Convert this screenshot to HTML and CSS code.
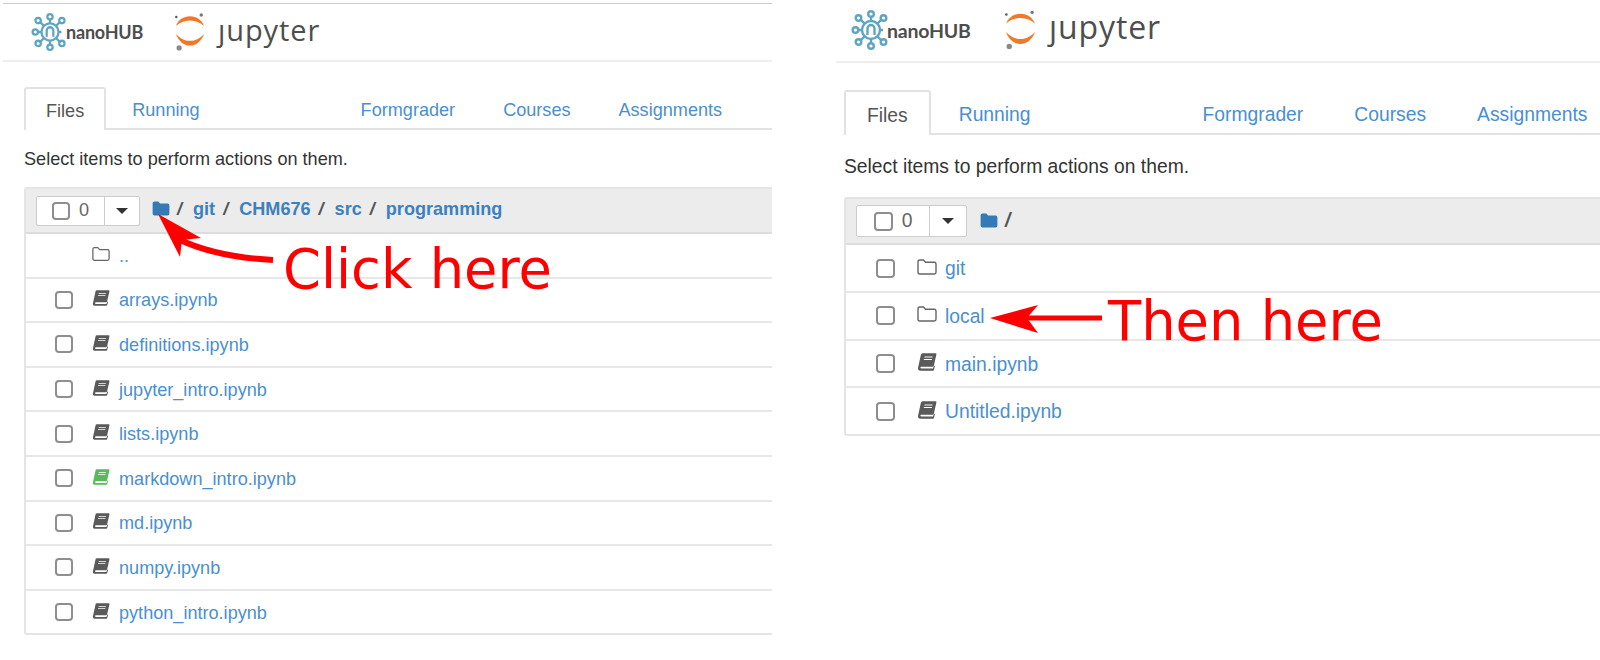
FILE: index.html
```html
<!DOCTYPE html>
<html lang="en">
<head>
  <meta charset="UTF-8">
  <title>nanoHUB Jupyter file browser</title>
  <link rel="stylesheet" href="styles.css">
</head>
<body>
  <svg class="defs" width="0" height="0">
    <symbol id="i-nano" viewBox="0 0 40 40">
      <g fill="none" stroke="#5fa5c2" stroke-width="2.4">
        <circle cx="20" cy="20" r="9"/>
        <path d="M20 11V6M26.400 13.600L31 9M29 20h3M26.400 26.400L31 31M20 29v5M13.600 26.400L9 31M11 20H7M13.600 13.600L9 9"/>
        <circle cx="20" cy="4" r="2.800"/>
        <circle cx="32.500" cy="8" r="2.800"/>
        <circle cx="32.500" cy="32" r="2.800"/>
        <circle cx="20" cy="36" r="2.800"/>
        <circle cx="7.500" cy="32" r="2.800"/>
        <circle cx="4.500" cy="20" r="2.800"/>
        <circle cx="7.500" cy="8" r="2.800"/>
        <path d="M16.500 25v-6.500a3.500 3.500 0 0 1 7 0V25"/>
      </g>
    </symbol>
    <symbol id="i-jup" viewBox="0 0 32 40">
      <path fill="#f37726" d="M16 3.200C9 3.200 3.500 7 1 13.600 5 9.800 10 7.600 16 7.600s11 2.200 15 6C28.500 7 23 3.200 16 3.200z"/>
      <path fill="#f37726" d="M16 34.400C9 34.400 3.500 29 1 22 5 26.200 10 29.400 16 29.400s11-3.200 15-7.400C28.500 29 23 34.400 16 34.400z"/>
      <circle cx="28" cy="1.800" r="1.800" fill="#777"/>
      <circle cx="1.400" cy="4" r="1.300" fill="#555"/>
      <circle cx="4.400" cy="37" r="2.800" fill="#8a8a8a"/>
    </symbol>
    <symbol id="i-folder" viewBox="0 0 20 17">
      <path fill="none" stroke="#666" stroke-width="1.400" stroke-linejoin="round" d="M1 3.200Q1 1.500 2.700 1.500H6.500L8.500 3.700H17.300Q19 3.700 19 5.400V13.800Q19 15.500 17.300 15.500H2.700Q1 15.500 1 13.800z"/>
    </symbol>
    <symbol id="i-folder-solid" viewBox="0 0 20 17">
      <path fill="#337ab7" d="M.5 2.500Q.5.500 2.500.5H7L9 2.700H17.500Q19.500 2.700 19.500 4.700V14.500Q19.500 16.500 17.500 16.500H2.500Q.5 16.500.5 14.500z"/>
    </symbol>
    <symbol id="i-book" viewBox="0 0 20 18">
      <path fill="currentColor" d="M5.500.3H18.500Q19.700.3 19.400 1.600L16.800 12.700Q16.500 13.700 15.500 13.700H4.500Q3.300 13.700 3.300 14.600T4.500 15.600H16L17 12.800 17.900 13.200 16.900 16.800Q16.700 17.700 15.800 17.700H3.500Q.8 17.700 1 15L3.900 1.800Q4.200.3 5.500.3z"/>
      <path fill="#fff" d="M7.500 3.600H15.500V4.500H7.300zM6.900 6H14.900V6.900H6.700z"/>
    </symbol>
  </svg>

  <main class="page">
    <section class="shot shot-left">
      <header class="navbar">
        <svg class="logo-nano"><use href="#i-nano"/></svg>
        <span class="nano-text">nanoHUB</span>
        <svg class="logo-jup"><use href="#i-jup"/></svg>
        <span class="jup-text">ȷupyter</span>
      </header>
      <div class="content">
        <nav class="tabs">
          <a class="tab active">Files</a>
          <a class="tab">Running</a>
          <a class="tab tab-far">Formgrader</a>
          <a class="tab">Courses</a>
          <a class="tab">Assignments</a>
        </nav>
        <p class="hint">Select items to perform actions on them.</p>
        <div class="list">
          <div class="list-head">
            <div class="select-btn">
              <span class="select-main"><i class="check"></i><span class="count">0</span></span>
              <span class="select-caret"><i class="caret"></i></span>
            </div>
            <div class="crumbs">
              <svg class="icon"><use href="#i-folder-solid"/></svg>
              <span class="sep">/</span><a>git</a><span class="sep">/</span><a>CHM676</a><span class="sep">/</span><a>src</a><span class="sep">/</span><a>programming</a>
            </div>
          </div>
          <div class="row"><span class="check-slot"></span><svg class="icon"><use href="#i-folder"/></svg><a>..</a></div>
          <div class="row"><span class="check-slot"><i class="check"></i></span><svg class="icon book"><use href="#i-book"/></svg><a>arrays.ipynb</a></div>
          <div class="row"><span class="check-slot"><i class="check"></i></span><svg class="icon book"><use href="#i-book"/></svg><a>definitions.ipynb</a></div>
          <div class="row"><span class="check-slot"><i class="check"></i></span><svg class="icon book"><use href="#i-book"/></svg><a>jupyter_intro.ipynb</a></div>
          <div class="row"><span class="check-slot"><i class="check"></i></span><svg class="icon book"><use href="#i-book"/></svg><a>lists.ipynb</a></div>
          <div class="row"><span class="check-slot"><i class="check"></i></span><svg class="icon book running"><use href="#i-book"/></svg><a>markdown_intro.ipynb</a></div>
          <div class="row"><span class="check-slot"><i class="check"></i></span><svg class="icon book"><use href="#i-book"/></svg><a>md.ipynb</a></div>
          <div class="row"><span class="check-slot"><i class="check"></i></span><svg class="icon book"><use href="#i-book"/></svg><a>numpy.ipynb</a></div>
          <div class="row"><span class="check-slot"><i class="check"></i></span><svg class="icon book"><use href="#i-book"/></svg><a>python_intro.ipynb</a></div>
        </div>
      </div>
    </section>

    <section class="shot shot-right">
      <header class="navbar">
        <svg class="logo-nano"><use href="#i-nano"/></svg>
        <span class="nano-text">nanoHUB</span>
        <svg class="logo-jup"><use href="#i-jup"/></svg>
        <span class="jup-text">ȷupyter</span>
      </header>
      <div class="content">
        <nav class="tabs">
          <a class="tab active">Files</a>
          <a class="tab">Running</a>
          <a class="tab tab-far">Formgrader</a>
          <a class="tab">Courses</a>
          <a class="tab">Assignments</a>
        </nav>
        <p class="hint">Select items to perform actions on them.</p>
        <div class="list">
          <div class="list-head">
            <div class="select-btn">
              <span class="select-main"><i class="check"></i><span class="count">0</span></span>
              <span class="select-caret"><i class="caret"></i></span>
            </div>
            <div class="crumbs">
              <svg class="icon"><use href="#i-folder-solid"/></svg>
              <span class="sep">/</span>
            </div>
          </div>
          <div class="row"><span class="check-slot"><i class="check"></i></span><svg class="icon"><use href="#i-folder"/></svg><a>git</a></div>
          <div class="row"><span class="check-slot"><i class="check"></i></span><svg class="icon"><use href="#i-folder"/></svg><a>local</a></div>
          <div class="row"><span class="check-slot"><i class="check"></i></span><svg class="icon book"><use href="#i-book"/></svg><a>main.ipynb</a></div>
          <div class="row"><span class="check-slot"><i class="check"></i></span><svg class="icon book"><use href="#i-book"/></svg><a>Untitled.ipynb</a></div>
        </div>
      </div>
    </section>

    <!-- red annotations drawn on top of the two screenshots -->
    <svg class="arrows" width="1600" height="660">
      <path d="M273 260C235 258 205 252 178 239" fill="none" stroke="#f00" stroke-width="6"/>
      <path d="M158 214L180 257 182 240 201 238z" fill="#f00"/>
      <path d="M1102 318H1025" fill="none" stroke="#f00" stroke-width="5"/>
      <path d="M990 318L1038 305 1027 318 1038 333z" fill="#f00"/>
    </svg>
    <span class="note note-click">Click here</span>
    <span class="note note-then">Then here</span>
  </main>
</body>
</html>
```

FILE: styles.css
```css
html, body {
  margin: 0;
  padding: 0;
  background: #fff;
}
body {
  font-family: "Liberation Sans", Arial, sans-serif;
  color: #333;
  overflow: hidden;
}
a {
  color: #4a8fcf;
}
.defs {
  position: absolute;
}
.page {
  position: relative;
  display: flex;
  width: 1600px;
  height: 660px;
  overflow: hidden;
}

/* each screenshot is the same page at a slightly different zoom */
.shot {
  flex: none;
  overflow: hidden;
}
.shot-left {
  --fs: 18.1px;
  --row: 44.6px;
  --icon: 18px;
  --check: 18px;
  width: 769px;
  margin-left: 3px;
  padding-top: 3px;
}
.shot-right {
  --fs: 19.3px;
  --row: 47.7px;
  --icon: 20px;
  --check: 19px;
  width: 764px;
  margin-left: 64px;
  padding-top: 3px;
}

.navbar {
  display: flex;
  align-items: center;
  box-sizing: border-box;
  border-bottom: 2px solid #eee;
}
.shot-left .navbar {
  height: 59px;
  border-top: 1px solid #ccc;
  padding-left: 28px;
}
.shot-right .navbar {
  height: 60px;
  padding-left: 15px;
  padding-bottom: 4px;
}
.logo-nano {
  flex: none;
}
.shot-left .logo-nano {
  width: 38px;
  height: 38px;
}
.shot-right .logo-nano {
  width: 40px;
  height: 40px;
}
.nano-text {
  font-family: "Lato", sans-serif;
  font-weight: 700;
  color: #4d4d4d;
  letter-spacing: -0.2px;
}
.shot-left .nano-text {
  font-size: 18px;
  margin-left: -3px;
  width: 109px;
}
.shot-right .nano-text {
  font-size: 19.5px;
  margin-left: -4px;
  width: 118px;
}
.logo-jup {
  flex: none;
}
.shot-left .logo-jup {
  width: 30px;
  height: 38px;
}
.shot-right .logo-jup {
  width: 31px;
  height: 40px;
}
.jup-text {
  font-family: "Open Sans", sans-serif;
  color: #4e4e4e;
  line-height: 1;
}
.shot-left .jup-text {
  font-size: 29px;
  letter-spacing: 0.9px;
  margin: 0 0 6px 13px;
}
.shot-right .jup-text {
  font-size: 32px;
  letter-spacing: 0.9px;
  margin: 0 0 6px 13px;
}

.shot-left .content {
  padding: 25px 0 0 21px;
}
.shot-right .content {
  padding: 27px 0 0 8px;
}

.tabs {
  display: flex;
  font-size: var(--fs);
  border-bottom: 2px solid #e2e2e2;
}
.shot-left .tabs {
  height: 41px;
}
.shot-right .tabs {
  height: 43px;
}
.tab {
  display: flex;
  align-items: center;
  box-sizing: border-box;
  padding: 6px 21px 0;
  margin-right: 6px;
}
.shot-right .tab {
  padding: 6px 23px 0;
  margin-right: 5px;
}
.tab.active {
  color: #555;
  height: calc(100% + 2px);
  background: #fff;
  border: 2px solid #e2e2e2;
  border-bottom: 0;
  border-radius: 3px 3px 0 0;
  padding: 4px 20px 0;
  margin-right: 5px;
}
.shot-right .tab.active {
  padding: 4px 21px 0;
}
.shot-left .tab-far {
  margin-left: 113px;
}
.shot-right .tab-far {
  margin-left: 121px;
}

.hint {
  margin: 0;
  font-size: var(--fs);
  color: #333;
}
.shot-left .hint {
  padding: 18px 0 17px;
  line-height: 22px;
}
.shot-right .hint {
  padding: 20px 0 18px;
  line-height: 24px;
}

.list {
  border: 2px solid #e4e4e4;
  border-right: 0;
  border-radius: 3px 0 0 3px;
  font-size: var(--fs);
}
.list-head {
  display: flex;
  align-items: center;
  box-sizing: border-box;
  background: #ececec;
  border-bottom: 2px solid #ddd;
}
.shot-left .list-head {
  height: 45px;
  padding-left: 10px;
}
.shot-right .list-head {
  height: 46.300px;
  padding-left: 10px;
}
.select-btn {
  display: flex;
  box-sizing: border-box;
  background: #fff;
  border: 1px solid #ccc;
  border-radius: 2px;
}
.shot-left .select-btn {
  height: 30px;
  width: 104px;
}
.shot-right .select-btn {
  height: 32px;
  width: 111px;
}
.select-main {
  display: flex;
  align-items: center;
  justify-content: center;
  gap: 9px;
  flex: 1;
  border-right: 1px solid #ccc;
}
.count {
  color: #666;
}
.select-caret {
  display: flex;
  align-items: center;
  justify-content: center;
  width: 34px;
}
.shot-right .select-caret {
  width: 36px;
}
.caret {
  width: 0;
  height: 0;
  border-top: 6px solid #333;
  border-left: 6px solid transparent;
  border-right: 6px solid transparent;
}
.check {
  display: block;
  box-sizing: border-box;
  width: var(--check);
  height: var(--check);
  background: #fff;
  border: 2px solid #8e8e8e;
  border-radius: 4px;
}
.crumbs {
  display: flex;
  align-items: center;
  gap: 8px;
  font-weight: 700;
  padding: 0 0 2px 12px;
}
.shot-right .crumbs {
  padding: 0 0 0 12px;
}
.crumbs a {
  color: #3c80bd;
  margin-left: 3px;
}
.sep {
  font-style: italic;
  color: #555;
}
.crumbs .icon {
  height: 15px;
  margin: -2px -1px 0 0;
}
.shot-right .crumbs .icon {
  margin: -2px -2px 0 0;
}

.row {
  display: flex;
  align-items: center;
  box-sizing: border-box;
  height: var(--row);
  border-bottom: 2px solid #e7e7e7;
}
.row:last-child {
  height: calc(var(--row) - 2px);
  border-bottom: 0;
}
.check-slot {
  flex: none;
}
.shot-left .check-slot {
  width: 37px;
  margin-left: 29px;
}
.shot-right .check-slot {
  width: 41px;
  margin-left: 30px;
}
.icon {
  flex: none;
  width: var(--icon);
  height: var(--icon);
  margin-top: -3px;
}
.row a {
  margin-left: 9px;
  padding-top: 2px;
}
.shot-right .row a {
  margin-left: 8px;
}
.book {
  color: #5a5a5a;
}
.book.running {
  color: #5cb85c;
}

.arrows {
  position: absolute;
  left: 0;
  top: 0;
}
.note {
  position: absolute;
  font-family: "DejaVu Sans", sans-serif;
  font-size: 54.3px;
  line-height: 1;
  color: #f00;
  white-space: nowrap;
}
.note-click {
  left: 283px;
  top: 243px;
}
.note-then {
  left: 1108px;
  top: 295px;
}
```
